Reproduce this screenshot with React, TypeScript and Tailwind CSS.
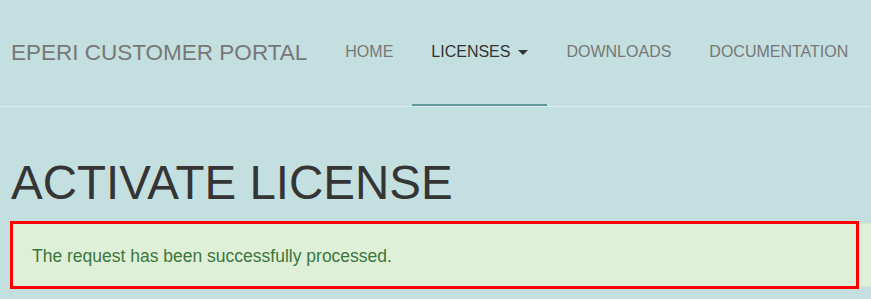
import React from 'react'

const navItems = [
  { label: 'HOME' },
  { label: 'LICENSES', active: true, caret: true },
  { label: 'DOWNLOADS' },
  { label: 'DOCUMENTATION' },
]

export default function App() {
  return (
    <div className="min-h-screen w-full overflow-hidden bg-[#c3dfdf] font-['Liberation_Sans',Arial,sans-serif]">
      {/* navbar */}
      <header className="flex h-[107px] items-stretch border-b border-[#dcecec] pl-[11px]">
        <a className="flex items-center whitespace-nowrap text-[22.5px] text-[#777]">EPERI CUSTOMER PORTAL</a>
        <ul className="ml-[19px] flex items-stretch">
          {navItems.map(item => (
            <li
              key={item.label}
              className={
                item.active
                  ? 'flex items-center whitespace-nowrap border-b-2 border-[#5e9a98] px-[19px] text-[16px] text-[#333]'
                  : 'flex items-center whitespace-nowrap border-b-2 border-transparent px-[19px] text-[16px] text-[#777]'
              }
            >
              {item.label}
              {item.caret && (
                <span className="ml-[8px] inline-block h-0 w-0 border-x-[5px] border-t-[5px] border-x-transparent border-t-[#333]" />
              )}
            </li>
          ))}
        </ul>
      </header>

      <main className="pl-[11px]">
        <h1 className="mt-[50px] whitespace-nowrap text-[47.5px] leading-[52px] text-[#353535]">ACTIVATE LICENSE</h1>

        <div className="relative mt-[14px] w-[900px] border border-[#d6e9c6] bg-[#dff0d8] px-5 pb-[18px] pt-[20px] text-[17.5px] leading-[24px] text-[#3c763d]">
          The request has been successfully processed.
          {/* highlight frame */}
          <div className="pointer-events-none absolute -left-[2px] -top-[3px] h-[68px] w-[849px] border-[3px] border-[#ff0000]" />
        </div>
      </main>
    </div>
  )
}
